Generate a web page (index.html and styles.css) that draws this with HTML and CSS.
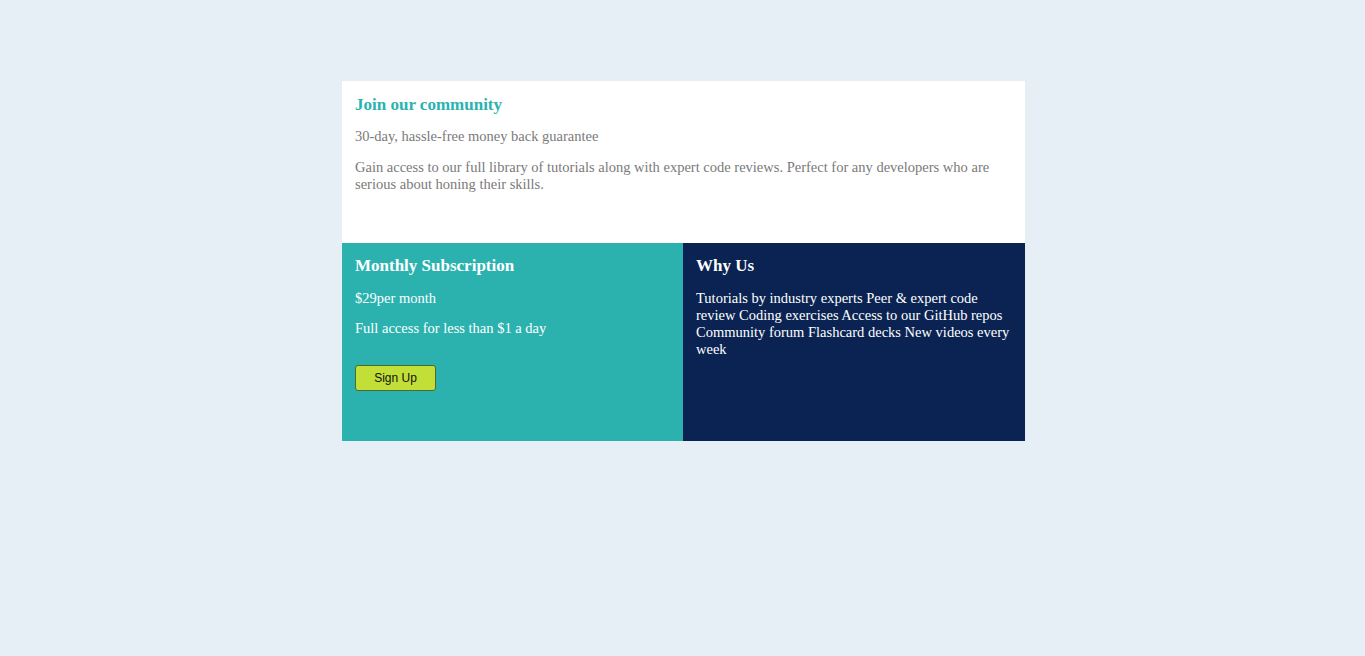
FILE: index.html
```html
<!DOCTYPE html>
<html lang="en">
<head>
<meta charset="utf-8">
<title>Join our community</title>
<link rel="stylesheet" href="styles.css">
</head>
<body>
<main class="card">
  <section class="intro">
    <h1 class="title">Join our community</h1>
    <p class="lead">30-day, hassle-free money back guarantee</p>
    <p class="desc">Gain access to our full library of tutorials along with expert code reviews. Perfect for any developers who are serious about honing their skills.</p>
  </section>
  <div class="bottom">
    <section class="sub">
      <h2 class="head">Monthly Subscription</h2>
      <p class="txt">$29per month</p>
      <p class="txt">Full access for less than $1 a day</p>
      <button class="btn">Sign Up</button>
    </section>
    <section class="why">
      <h2 class="head">Why Us</h2>
      <p class="txt">Tutorials by industry experts Peer &amp; expert code review Coding exercises Access to our GitHub repos Community forum Flashcard decks New videos every week</p>
    </section>
  </div>
</main>
</body>
</html>
```

FILE: styles.css
```css
html, body {
  margin: 0;
  padding: 0;
}
body {
  background: #e6eef6;
  font-family: "Liberation Serif", "Times New Roman", serif;
  padding-top: 81px;
  height: 656px;
  box-sizing: border-box;
}
.card {
  width: 683px;
  margin-left: calc(50% - 340.5px);
  background: #fff;
}
.intro {
  height: 162px;
  box-sizing: border-box;
  padding: 14px 13px 0;
}
.title {
  margin: 0;
  font-size: 17px;
  line-height: 19.5px;
  color: #2bb3b1;
  font-weight: bold;
}
.lead, .desc {
  margin: 14px 0 0;
  font-size: 14.5px;
  line-height: 17px;
  color: #7a7a7a;
}
.lead {
  margin-top: 13px;
}
.bottom {
  display: flex;
}
.sub, .why {
  height: 198px;
  box-sizing: border-box;
  padding: 13px 13px 0;
  color: #fff;
}
.sub {
  width: 341px;
  background: #2bb2af;
}
.why {
  width: 342px;
  background: #0a2352;
  padding-right: 14px;
}
.head {
  margin: 0;
  font-size: 17px;
  line-height: 19.5px;
  font-weight: bold;
}
.txt {
  margin: 14px 0 0;
  font-size: 14.5px;
  line-height: 17px;
}
.sub .txt + .txt {
  margin-top: 13px;
}
.btn {
  display: block;
  margin-top: 28px;
  width: 81px;
  height: 26px;
  background: #c1df36;
  border: 1px solid #4a6b2e;
  border-radius: 3px;
  font-family: "Liberation Sans", Arial, sans-serif;
  font-size: 12px;
  color: #111;
  padding: 0;
}
```
